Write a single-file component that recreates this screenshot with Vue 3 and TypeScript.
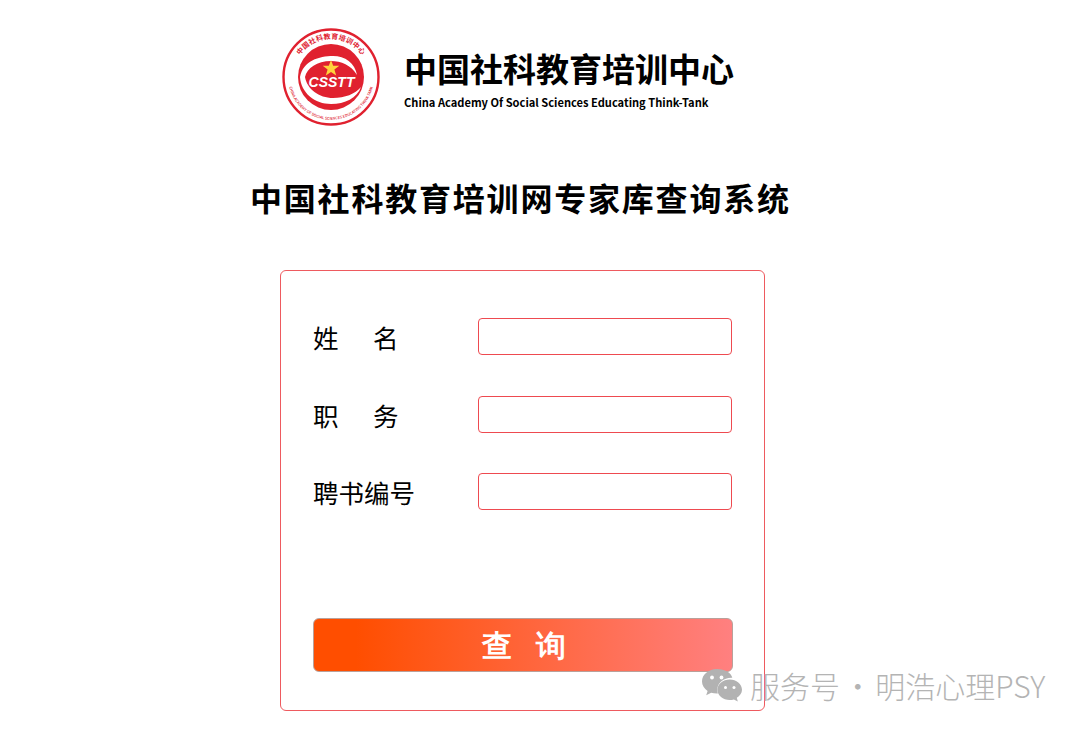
<script setup lang="ts">
const fields = [
  { label: '姓名', spread: true },
  { label: '职务', spread: true },
  { label: '聘书编号', spread: false }
];
</script>

<template>
  <div class="page">
    <div class="brand">
      <svg class="logo" viewBox="0 0 100 100" width="100" height="100">
        <defs>
          <path id="arcTop" d="M 12 50 A 38 38 0 0 1 88 50" />
          <path id="arcBottom" d="M 7.400 44 A 43 43 0 1 0 92.600 44" />
        </defs>
        <circle cx="50" cy="50" r="47.500" fill="#fff" stroke="#e0212f" stroke-width="2.400" />
        <circle cx="50" cy="50" r="33" fill="#e0212f" />
        <text class="ring-cn" fill="#e0212f"><textPath href="#arcTop" startOffset="50%" text-anchor="middle">中国社科教育培训中心</textPath></text>
        <text class="ring-en" fill="#e0212f"><textPath href="#arcBottom" startOffset="50%" text-anchor="middle">CHINA ACADEMY OF SOCIAL SCIENCES EDUCATING THINK-TANK</textPath></text>
        <path d="M 19 50 C 22 34 38 29 52 29 C 64 29 74 36 76 48 C 70 38 60 34 50 34 C 36 34 26 41 24 50 C 26 62 38 71 52 71 C 64 71 74 67 80 60 C 76 71 64 77 50 77 C 34 77 20 66 19 50 Z" fill="#fff" />
        <polygon points="50,33 52.200,38.700 58.300,38.800 53.400,42.600 55.200,48.500 50,45 44.800,48.500 46.600,42.600 41.700,38.800 47.800,38.700" fill="#ffd23c" />
        <text x="50.500" y="60" class="csstt" fill="#fff" text-anchor="middle">CSSTT</text>
      </svg>
      <div class="brand-text">
        <div class="brand-cn">中国社科教育培训中心</div>
        <div class="brand-en">China Academy Of Social Sciences Educating Think-Tank</div>
      </div>
    </div>

    <h1 class="title">中国社科教育培训网专家库查询系统</h1>

    <form class="card" @submit.prevent>
      <div class="rows">
        <label v-for="f in fields" :key="f.label" class="row">
          <span class="label" :class="{ spread: f.spread }">
            <span v-for="c in f.label" :key="c">{{ c }}</span>
          </span>
          <input class="input" type="text" />
        </label>
      </div>
      <button class="submit" type="submit">查&nbsp;询</button>
    </form>

    <div class="watermark">
      <svg class="wechat" viewBox="0 0 42 34" width="42" height="34">
        <path d="M16 1C7.500 1 1 6.600 1 13.400c0 3.900 2.200 7.200 5.600 9.500L5.200 27.300l5-2.600c1.800.5 3.700.8 5.600.8h1.100c-.4-1.200-.6-2.400-.6-3.700 0-6.700 6.300-12 14-12h1C30.300 4.600 23.800 1 16 1Z" fill="#b2b2b2" />
        <circle cx="11" cy="9.500" r="1.900" fill="#fff" />
        <circle cx="20.500" cy="9.500" r="1.900" fill="#fff" />
        <path d="M41 21.700c0-5.700-5.600-10.300-12.300-10.300S16.400 16 16.400 21.700 22 32 28.700 32c1.500 0 2.900-.2 4.200-.6l3.900 2.100-1-3.700c3-1.900 5.200-4.800 5.200-8.100Z" fill="#b2b2b2" />
        <circle cx="24.500" cy="19.500" r="1.500" fill="#fff" />
        <circle cx="33" cy="19.500" r="1.500" fill="#fff" />
      </svg>
      <span class="wm-text">服务号 · 明浩心理PSY</span>
    </div>
  </div>
</template>

<style>
html,
body {
  margin: 0;
  background: #fff;
}
</style>

<style scoped>
.page {
  position: relative;
  width: 1080px;
  height: 729px;
  overflow: hidden;
  font-family: "Noto Sans CJK SC", "Noto Sans", sans-serif;
  color: #000;
  display: flex;
  flex-direction: column;
  align-items: flex-start;
  padding-top: 27px;
  box-sizing: border-box;
}

.brand {
  display: flex;
  align-items: center;
  margin-left: 281px;
  gap: 23px;
}

.logo {
  flex: none;
}

.ring-cn {
  font-size: 7px;
  font-weight: 700;
  letter-spacing: 0.3px;
}

.ring-en {
  font-size: 3.800px;
  font-weight: 500;
}

.csstt {
  font-family: "Liberation Sans", sans-serif;
  font-size: 14px;
  font-weight: 700;
  font-style: italic;
}

.brand-text {
  display: flex;
  flex-direction: column;
  margin-top: 4px;
}

.brand-cn {
  font-size: 33px;
  line-height: 40px;
  font-weight: 700;
}

.brand-en {
  font-size: 11.100px;
  line-height: 16px;
  font-weight: 700;
  margin-top: 6px;
  white-space: nowrap;
}

.title {
  margin: 48px 0 0 250px;
  font-size: 32px;
  line-height: 44px;
  font-weight: 700;
  letter-spacing: 1.800px;
  white-space: nowrap;
}

.card {
  width: 485px;
  height: 441px;
  margin: 51px 0 0 280px;
  box-sizing: border-box;
  border: 1px solid #ee5a5f;
  border-radius: 6px;
  padding: 47px 32px 0 32px;
  display: flex;
  flex-direction: column;
}

.rows {
  display: flex;
  flex-direction: column;
  gap: 40.500px;
}

.row {
  display: flex;
  align-items: center;
  justify-content: space-between;
}

.label {
  display: flex;
  width: 104px;
  font-size: 25.500px;
  line-height: 37px;
}

.label.spread {
  width: 85.500px;
  margin-right: 79px;
  justify-content: space-between;
}

.input {
  width: 254px;
  height: 37px;
  box-sizing: border-box;
  border: 1px solid #ee4a50;
  border-radius: 4px;
  background: #fff;
  outline: none;
}

.submit {
  margin-top: auto;
  margin-bottom: 38px;
  width: 420px;
  height: 54px;
  border: 1px solid #b9a09a;
  border-radius: 6px;
  background: linear-gradient(90deg, #ff4e00 10%, #ff8080 100%);
  color: #fff;
  font-size: 30px;
  font-weight: 700;
  letter-spacing: 8px;
  padding: 2px 0 0 10px;
  cursor: pointer;
}

.watermark {
  position: absolute;
  left: 701px;
  top: 668px;
  display: flex;
  align-items: center;
  gap: 7px;
  color: #b4b4b4;
}

.wechat {
  flex: none;
}

.wm-text {
  font-size: 30px;
  line-height: 34px;
  font-weight: 300;
  word-spacing: -4px;
  white-space: nowrap;
}
</style>
